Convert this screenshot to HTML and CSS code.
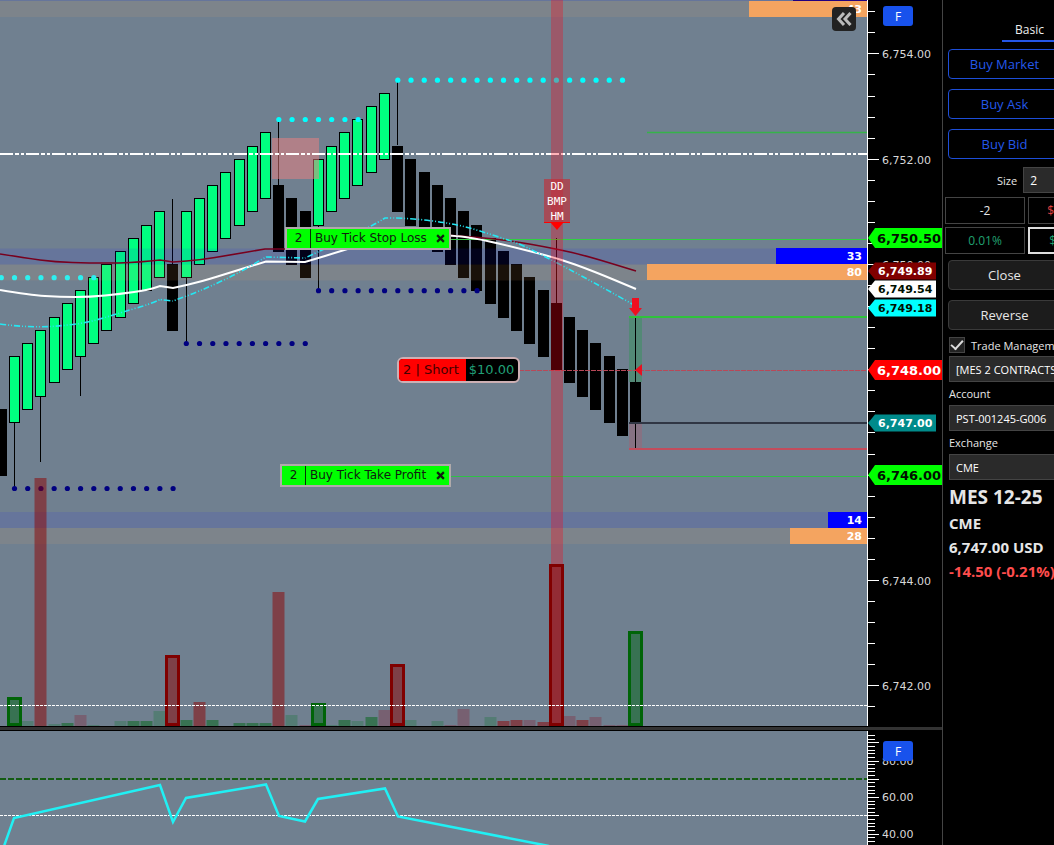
FILE: index.html
```html
<!DOCTYPE html>
<html lang="en">
<head>
<meta charset="utf-8">
<title>MES 12-25</title>
<link rel="stylesheet" href="styles.css">
</head>
<body>
<div class="app">
  <main class="charts">
    <section class="pane pane-price" aria-label="Price chart">
      <div class="plot">
        <svg class="canvas" id="price" aria-hidden="true"></svg>
        <div class="order stop"><span class="qty">2</span><span class="name">Buy Tick Stop Loss</span><button class="cancel" type="button" aria-label="Cancel stop loss"><svg viewBox="0 0 8 8"><path d="M1 1l6 6M7 1l-6 6"/></svg></button></div>
        <div class="position"><span class="side">2 | Short</span><span class="pnl">$10.00</span></div>
        <div class="order profit"><span class="qty">2</span><span class="name">Buy Tick Take Profit</span><button class="cancel" type="button" aria-label="Cancel take profit"><svg viewBox="0 0 8 8"><path d="M1 1l6 6M7 1l-6 6"/></svg></button></div>
        <div class="signal"><span>DD</span><span>BMP</span><span>HM</span></div>
        <button class="collapse" type="button" aria-label="Collapse panel"><svg viewBox="0 0 24 24"><path d="M12 6L6.500 12l5.500 6M18.500 6L13 12l5.500 6"/></svg></button>
      </div>
      <div class="axis">
        <svg class="canvas" id="price-axis"></svg>
        <button class="fix" type="button">F</button>
      </div>
    </section>
    <div class="splitter"></div>
    <section class="pane pane-indicator" aria-label="Oscillator">
      <div class="plot"><svg class="canvas" id="osc" aria-hidden="true"></svg></div>
      <div class="axis">
        <svg class="canvas" id="osc-axis"></svg>
        <button class="fix" type="button">F</button>
      </div>
    </section>
  </main>
  <aside class="panel">
    <nav class="tabs"><a class="tab" href="#basic">Basic</a></nav>
    <div class="stack">
      <button class="buy" type="button">Buy Market</button>
      <button class="buy" type="button">Buy Ask</button>
      <button class="buy" type="button">Buy Bid</button>
    </div>
    <div class="size"><label for="size">Size</label><input class="field" id="size" value="2"></div>
    <div class="stats">
      <span class="stat">-2</span><span class="stat loss">$-14.50</span>
      <span class="stat gain">0.01%</span><span class="stat gain active">$10.00</span>
    </div>
    <div class="stack">
      <button class="action" type="button">Close</button>
      <button class="action" type="button">Reverse</button>
    </div>
    <div class="form">
      <label class="check"><input type="checkbox" checked>Trade Management</label>
      <select class="field" aria-label="Trade management strategy"><option>[MES 2 CONTRACTS]</option></select>
      <label class="caption" for="account">Account</label>
      <select class="field" id="account"><option>PST-001245-G006</option></select>
      <label class="caption" for="exchange">Exchange</label>
      <select class="field" id="exchange"><option>CME</option></select>
    </div>
    <div class="quote">
      <h1>MES 12-25</h1>
      <p>CME</p>
      <p>6,747.00 USD</p>
      <p class="down">-14.50 (-0.21%)</p>
    </div>
  </aside>
</div>
<script src="chart.js"></script>
</body>
</html>
```
FILE: styles.css
```css
* { box-sizing: border-box; }
body { margin: 0; background: #000; color: #e6e6e6; font-family: "Open Sans", "Noto Sans", sans-serif; font-size: 13px; overflow: hidden; }
button, input, select { font: inherit; color: inherit; }
.app { display: grid; grid-template-columns: minmax(0, 1fr) 112px; min-height: 100vh; }
.charts { display: flex; flex-direction: column; min-width: 0; }
.pane { display: grid; grid-template-columns: minmax(0, 1fr) 75px; }
.pane-price { height: 726px; }
.pane-indicator { flex: 1; min-height: 114px; }
.splitter { height: 5px; background: #333; border: solid #000; border-width: 1px 0; }
.plot { position: relative; background: #708090; overflow: hidden; }
.axis { position: relative; border-left: 1px solid #fff; background: #000; overflow: hidden; }
.canvas { position: absolute; inset: 0; width: 100%; height: 100%; }
.canvas text { font-family: "DejaVu Sans", sans-serif; font-size: 11px; fill: #d8d8d8; }
.canvas text.bold { font-weight: bold; fill: #fff; }
.canvas text.large { font-size: 13px; }
.canvas text.dark { fill: #001000; }

.order, .position { position: absolute; display: flex; align-items: stretch; font: 12px "DejaVu Sans", sans-serif; color: #102010; border: 2px solid #b0aaaa; }
.order { height: 23px; line-height: 19px; background: #0f0; }
.order .qty { width: 24px; text-align: center; border-right: 1px solid #063006; }
.order .name { padding-left: 4px; flex: 1; white-space: nowrap; }
.cancel { width: 17px; padding: 0; border: 0; background: none; display: grid; place-items: center; }
.cancel svg { width: 9px; height: 9px; stroke: #102010; stroke-width: 2; }
.stop { left: 285px; top: 227px; width: 166px; }
.profit { left: 280px; top: 464px; width: 171px; }
.position { left: 397px; top: 357px; height: 26px; font-size: 13px; line-height: 22px; border-color: #cdb0b4; border-radius: 6px; background: #000; overflow: hidden; }
.position .side { padding: 0 7px 0 4px; background: #f00; color: #400; }
.position .pnl { padding: 0 4px 0 3px; color: #20a078; }
.signal { position: absolute; left: 544px; top: 179px; width: 26px; height: 44px; display: flex; flex-direction: column; align-items: center; background: rgba(200, 40, 50, .6); border-bottom: 1px solid #f00; color: #fff; font: 11px/15px "DejaVu Sans Mono", monospace; }
.collapse { position: absolute; right: 11px; top: 7px; width: 24px; height: 24px; padding: 0; border: 0; border-radius: 4px; background: #222; }
.collapse svg { display: block; fill: none; stroke: #bbb; stroke-width: 3; }
.fix { position: absolute; left: 15px; top: 6px; width: 30px; height: 20px; padding: 0; border: 0; border-radius: 3px; background: #1852ec; color: #fff; font-size: 12px; }
.pane-indicator .fix { top: 10px; }

.panel { border-left: 1px solid #444; padding: 20px 0 0 5px; overflow: hidden; display: flex; flex-direction: column; align-items: flex-start; }
.tabs { width: 113px; display: flex; justify-content: flex-end; margin-bottom: 7px; }
.tab { width: 59px; height: 22px; line-height: 20px; padding-right: 4px; text-align: center; color: #eee; text-decoration: none; border-bottom: 2px solid #2456e6; font-size: 12px; }
.stack { display: grid; gap: 10px; width: 113px; }
.buy, .action { height: 30px; padding: 0; border-radius: 4px; white-space: nowrap; }
.buy { border: 1px solid #1d4ed8; background: #000; color: #2458ea; }
.action { border: 1px solid #3a3a3a; background: #1c1c1c; color: #e6e6e6; }
.field { height: 26px; width: 124px; padding: 0 6px; border: 1px solid #444; border-radius: 0; background: #2a2a2a; appearance: none; font-size: 11px; color: #fff; }
.size { display: flex; align-items: center; gap: 6px; margin: 8px 0 4px; padding-left: 49px; font-size: 11px; }
.size .field { width: 60px; font-size: 12px; }
.stats { display: grid; grid-template-columns: 80px 80px; gap: 3px; margin: 0 0 6px -3px; }
.stat { height: 27px; line-height: 25px; text-align: center; border: 1px solid #444; font-size: 12px; }
.loss { color: #e04040; }
.gain { color: #20a070; }
.stat.active { border: 2px solid #ddd; line-height: 23px; }
.form { display: flex; flex-direction: column; margin: 5px 0 0 1px; font-size: 11px; white-space: nowrap; }
.check { display: flex; align-items: center; gap: 6px; height: 20px; margin-bottom: 1px; }
.check input { appearance: none; width: 16px; height: 16px; margin: 0; border: 1px solid #444; background: #222; display: grid; place-items: center; }
.check input:checked::before { content: ""; width: 10px; height: 5px; border: solid #ddd; border-width: 0 0 2px 2px; rotate: -48deg; margin-bottom: 3px; }
.caption { line-height: 23px; }
.quote { margin-top: 4px; padding-left: 1px; white-space: nowrap; font-weight: 700; font-size: 15px; line-height: 24px; }
.quote h1 { margin: 0; font-size: 19px; font-weight: 700; line-height: 27px; }
.quote p { margin: 0; }
.down { color: #ff4d4d; }
```
FILE: chart.js
```js
const NS = 'http://www.w3.org/2000/svg';

function add(svg, tag, attrs, text) {
  const el = document.createElementNS(NS, tag);
  for (const key in attrs) el.setAttribute(key, attrs[key]);
  if (text) el.textContent = text;
  svg.appendChild(el);
  return el;
}

const rect = (s, x, y, w, h, fill, more) => add(s, 'rect', { x, y, width: w, height: h, fill, ...more });
const line = (s, x1, y1, x2, y2, stroke, width = 1, more) =>
  add(s, 'line', { x1, y1, x2, y2, stroke, 'stroke-width': width, ...more });
const poly = (s, points, fill) => add(s, 'polygon', { points, fill });

const barX = i => Math.floor(14.35 + 13.217 * i) + 0.5;
const priceY = p => Math.round(53.4 + (6754 - p) * 52.65);

// Candles: each run steps by a quarter point from the given top
const candles = [];
const run = (from, to, top, step, up) => {
  for (let i = from; i <= to; i++) {
    const high = top + (i - from) * step;
    candles.push({ i, high, low: high - 1.25, up });
  }
};
run(-1, -1, 6747.25, 0, false);
run(0, 11, 6748.25, 0.25, true);
run(12, 12, 6750, 0, false);
run(13, 19, 6751, 0.25, true);
run(20, 22, 6751.5, -0.25, false);
run(23, 28, 6752, 0.25, true);
run(29, 46, 6752.25, -0.25, false);
candles.push({ i: 47, high: 6747.75, low: 6747, up: false });

const wicks = [[0, 422, 487], [2, 396, 462], [5, 356, 396], [12, 199, 264], [13, 277, 343], [20, 120, 185],
  [23, 224, 290], [29, 80, 145], [41, 238, 303], [47, 317, 448]];

// Quadratic smoothing; a point listed twice stays a sharp corner
function smooth(points) {
  let d = `M${points[0]}`;
  for (let i = 1; i < points.length - 1; i++) {
    const [x, y] = points[i], [nx, ny] = points[i + 1];
    d += `Q${x} ${y} ${(x + nx) / 2} ${(y + ny) / 2}`;
  }
  return d + `L${points[points.length - 1]}`;
}

function drawPrice() {
  const s = document.getElementById('price');
  rect(s, 629, 317, 13, 65, 'rgba(40,150,80,.4)');
  rect(s, 629, 423, 13, 26, 'rgba(200,70,90,.25)');

  for (const [i, a, b] of wicks) line(s, barX(i), a, barX(i), b, '#000');
  for (const c of candles) {
    const x = barX(c.i), y = priceY(c.high), h = priceY(c.low) - y;
    if (c.up) rect(s, x - 5, y + 0.5, 10, h, '#00ff80', { stroke: '#000' });
    else rect(s, x - 5.5, y, 11, h + 1, '#000');
  }

  // Liquidity bands
  for (const y of [-15, 248.5, 512]) {
    rect(s, 0, y, '100%', 16, 'rgba(20,20,255,.1)');
    rect(s, 0, y + 16, '100%', 16, 'rgba(244,164,96,.1)');
  }
  rect(s, 272, 138, 47, 41, 'rgba(240,128,128,.5)');

  // Moving averages
  const curve = (pts, stroke, width, more) =>
    add(s, 'path', { d: smooth(pts), fill: 'none', stroke, 'stroke-width': width, ...more });
  line(s, 450, 239.5, '100%', 239.5, '#30d040', 1);
  curve([[0, 254], [25, 258], [55, 262], [90, 263], [120, 263], [140, 262], [160, 260], [160, 260], [173, 262], [173, 262], [200, 260], [230, 255], [265, 249], [265, 249], [305, 249], [305, 249], [345, 241], [390, 232], [450, 235], [507, 240], [557, 249], [587, 256], [636, 271]], '#78001e', 1.6);
  curve([[0, 290], [30, 295], [60, 297], [90, 297], [120, 294], [148, 290], [160, 286], [160, 286], [173, 288], [173, 288], [200, 282], [235, 271], [266, 261.5], [266, 261.5], [305, 262], [305, 262], [345, 250], [390, 235], [450, 235], [480, 239], [517, 248], [557, 258], [593, 271], [636, 289]], '#fff', 1.9);
  curve([[0, 324], [15, 326], [40, 327], [60, 326], [85, 323], [107, 317], [123, 312], [150, 304], [160, 299.5], [160, 299.5], [173, 301], [173, 301], [200, 291], [235, 275], [266, 257], [266, 257], [305, 258], [305, 258], [320, 251], [370, 227], [385, 218], [385, 218], [400, 218], [427, 220], [460, 225], [493, 235], [520, 244], [540, 254], [565, 267], [600, 286], [634, 305]], '#25e6f2', 1.6, { 'stroke-dasharray': '6 2 1 2 1 2' });

  line(s, 0, 154, '100%', 154, '#fff', 2, { 'stroke-dasharray': '13 2 4 2 3 2' });
  line(s, 647, 132.5, '100%', 132.5, '#36b34a', 1.3);
  line(s, 450, 476.5, '100%', 476.5, '#30c048', 1);
  line(s, 629, 317, '100%', 317, '#2fc23c', 2);
  line(s, 519, 370.5, '100%', 370.5, '#b84858', 1, { 'stroke-dasharray': '5 1' });
  line(s, 629, 423, '100%', 423, '#303644', 2);
  line(s, 629, 449, '100%', 449, '#c24c5c', 2);

  // Swing dots
  const dots = (from, to, y, fill) => {
    for (let i = from; i <= to; i++) add(s, 'circle', { cx: 14.5 + 13.217 * i, cy: y, r: 2.6, fill });
  };
  dots(-1, 6, 277.7, '#2ef0f0');
  dots(20, 26, 119.5, '#00ffff');
  dots(29, 46, 80.2, '#00ffff');
  dots(0, 12, 488.5, '#000080');
  dots(13, 22, 343.5, '#000080');
  dots(23, 35, 290.7, '#000080');

  // Volume: [index, top, kind]
  const tint = { g: 'rgba(0,110,30,.25)', G: 'rgba(0,100,20,.5)', p: 'rgba(139,0,20,.25)', R: 'rgba(139,0,0,.5)' };
  [[1, 721, 'g'], [2, 478, 'R'], [3, 724, 'g'], [4, 723, 'G'], [5, 715, 'p'], [6, 725, 'g'], [8, 721, 'g'], [9, 721, 'G'],
   [10, 721, 'G'], [11, 711, 'g'], [13, 720, 'G'], [14, 702, 'R'], [15, 720, 'G'], [17, 723, 'G'], [18, 723, 'G'],
   [19, 723, 'G'], [20, 592, 'R'], [21, 715, 'g'], [22, 725, 'p'], [24, 725, 'g'], [25, 720, 'G'], [26, 721, 'g'],
   [27, 717, 'G'], [28, 710, 'p'], [30, 720, 'g'], [32, 721, 'g'], [33, 725, 'p'], [34, 709, 'p'], [36, 717, 'g'],
   [37, 721, 'R'], [38, 720, 'R'], [39, 720, 'p'], [40, 722, 'R'], [42, 716, 'p'], [43, 720, 'R'], [44, 717, 'p'],
   [45, 725, 'p'], [46, 725, 'p']].forEach(([i, y, k]) => rect(s, barX(i) - 6, y, 12, 726 - y, tint[k]));

  rect(s, 551, 0, 12, 725, 'rgba(255,0,20,.3)');
  [[0, 697, 'G'], [12, 655, 'R'], [23, 703, 'G'], [29, 664, 'R'], [41, 564, 'R'], [47, 631, 'G']].forEach(([i, y, k]) =>
    rect(s, barX(i) - 6, y + 1.5, 12, 723 - y, tint[k], { stroke: k === 'G' ? '#006408' : '#800000', 'stroke-width': 3 }));
  line(s, 0, 705.5, '100%', 705.5, '#fff', 1, { 'stroke-dasharray': '3 1' });

  poly(s, '551,223 563,223 557,230', '#f00');
  poly(s, '632,298 639,298 639,308 642,308 635.5,316 629,308 632,308', '#f01020');
  poly(s, '635,370 642,364 642,376', '#e81020');

  // Depth bars, anchored to the right edge
  const g = add(s, 'svg', { x: '100%', overflow: 'visible' });
  [[-15, 16, 74, '#200080', ''], [1, 16, 118, '#f4a460', '43'], [248, 16, 91, '#0000ff', '33'], [264, 16, 220, '#f4a460', '80'],
   [512, 16, 39, '#0000ff', '14'], [528, 16, 77, '#f4a460', '28']].forEach(([y, h, w, fill, label]) => {
    rect(g, -w, y, w, h, fill);
    if (label) add(g, 'text', { x: -5, y: y + 12, class: 'bold', 'text-anchor': 'end' }, label);
  });
}

function drawPriceAxis() {
  const s = document.getElementById('price-axis');
  for (let k = -2; k <= 31; k++) {
    const y = Math.round(53.4 + k * 21.06) + 0.5;
    line(s, 0, y, k % 5 ? 7 : 11, y, '#fff');
  }
  for (const p of [6754, 6752, 6750, 6744, 6742])
    add(s, 'text', { x: 14, y: priceY(p) + 4.5 }, `6,${p - 6000}.00`);
  [[238, '#00ff00', '6,750.50', 1, 1], [271, '#800000', '6,749.89', 0, 0], [289, '#ffffff', '6,749.54', 0, 1],
   [308, '#00ffff', '6,749.18', 0, 1], [370, '#ff0000', '6,748.00', 1, 0], [423, '#008b8b', '6,747.00', 0, 0],
   [475, '#00ff00', '6,746.00', 1, 1]].forEach(([y, fill, label, large, dark]) => {
    const h = large ? 10 : 8.5, right = large ? 74 : 68;
    poly(s, `0,${y} 7,${y - h} ${right},${y - h} ${right},${y + h} 7,${y + h}`, fill);
    add(s, 'text', { x: large ? 9 : 10, y: y + (large ? 5 : 4), class: 'bold' + (large ? ' large' : '') + (dark ? ' dark' : '') }, label);
  });
}

function drawOscillator() {
  const s = document.getElementById('osc');
  line(s, 0, 48, '100%', 48, '#145c14', 2, { 'stroke-dasharray': '6 2' });
  line(s, 0, 84.5, '100%', 84.5, '#fff', 1, { 'stroke-dasharray': '3 1' });
  add(s, 'polyline', { points: '3,118 14,87 160,54 173,91 186,67 266,53.5 279,85 305,90.5 318,68 385,57.5 398,85.5 549,115',
    fill: 'none', stroke: '#20f0f4', 'stroke-width': 2.5 });
  const a = document.getElementById('osc-axis');
  for (let v = 94; v >= -100; v -= 2) {
    const y = Math.round(29.5 + (80 - v) * 1.83) + 0.5;
    line(a, 0, y, v % 10 ? 7 : 11, y, '#fff');
  }
  for (const v of [80, 60, 40]) add(a, 'text', { x: 14, y: Math.round(33.5 + (80 - v) * 1.83) }, v + '.00');
}

drawPrice();
drawPriceAxis();
drawOscillator();
```
